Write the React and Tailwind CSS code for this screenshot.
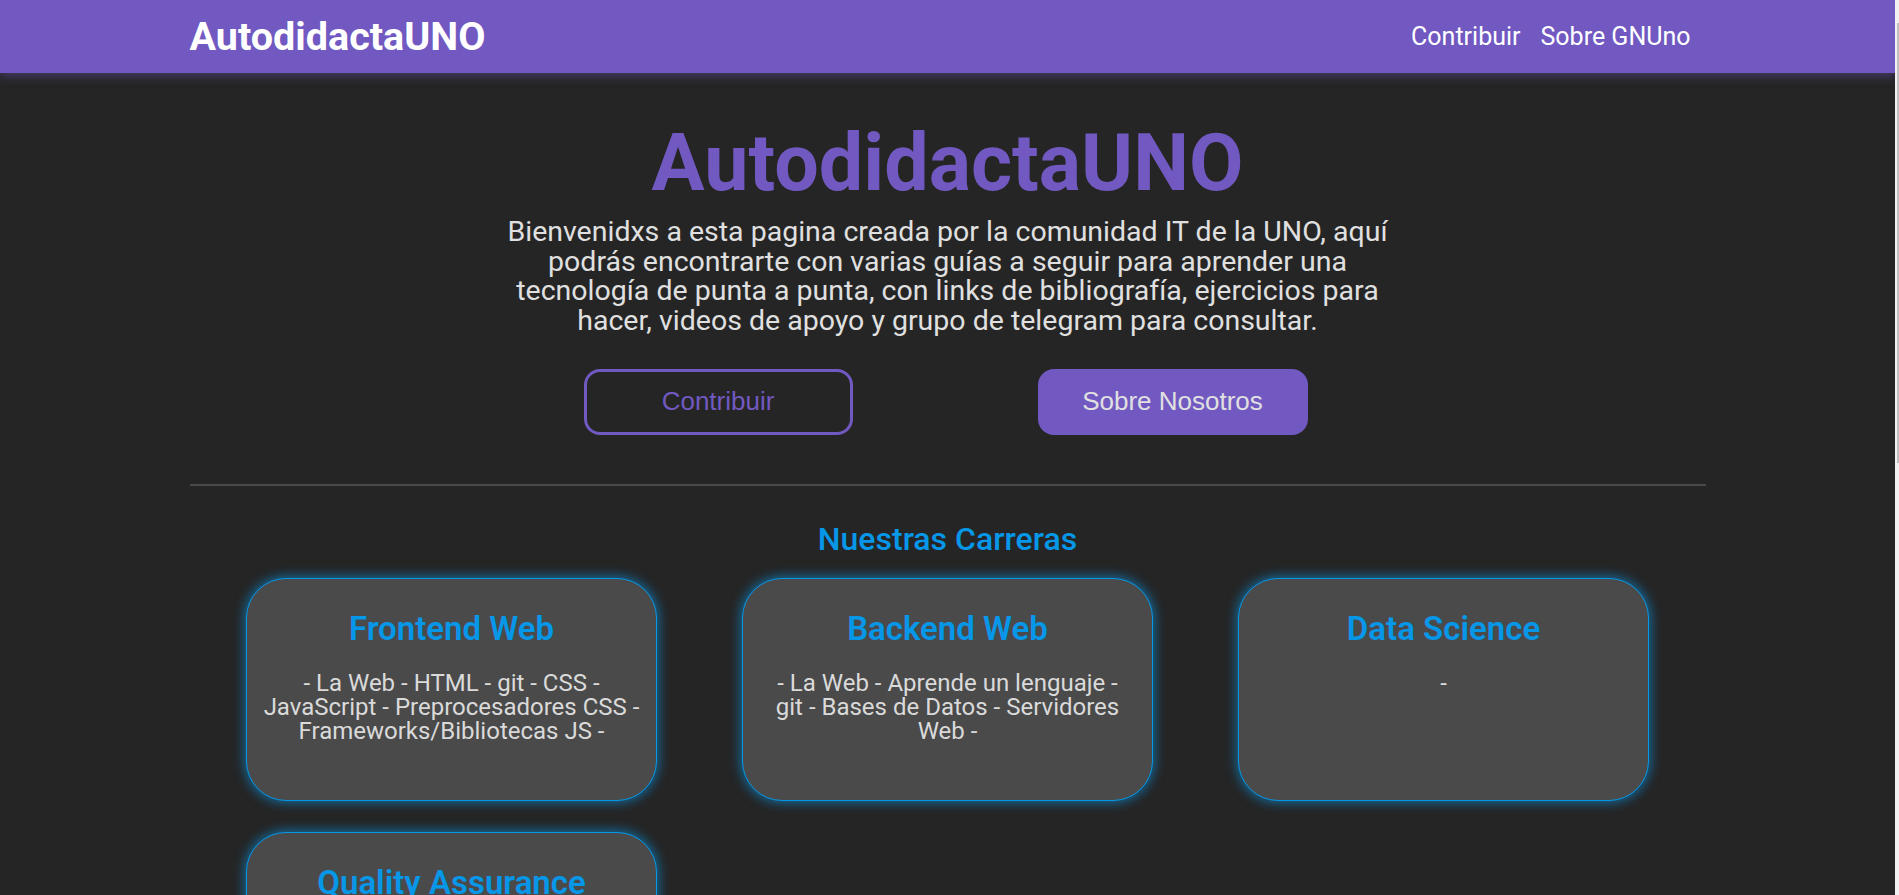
import React from 'react';

const careers = [
  {
    title: 'Frontend Web',
    lines: ['- La Web - HTML - git - CSS -', 'JavaScript - Preprocesadores CSS -', 'Frameworks/Bibliotecas JS -'],
  },
  {
    title: 'Backend Web',
    lines: ['- La Web - Aprende un lenguaje -', 'git - Bases de Datos - Servidores', 'Web -'],
  },
  { title: 'Data Science', lines: ['-'] },
  { title: 'Quality Assurance', lines: ['-'] },
];

const intro = [
  'Bienvenidxs a esta pagina creada por la comunidad IT de la UNO, aquí',
  'podrás encontrarte con varias guías a seguir para aprender una',
  'tecnología de punta a punta, con links de bibliografía, ejercicios para',
  'hacer, videos de apoyo y grupo de telegram para consultar.',
];

function CareerCard({ title, lines }) {
  return (
    <div className="h-[223px] rounded-[40px] border border-[#0797e8] bg-[#4a4a4a] px-3 pt-[31px] text-center shadow-[0_0_11px_2px_rgba(7,151,232,0.6)]">
      <h3 className="text-[33px] font-semibold leading-[38px] text-[#0797e8]">{title}</h3>
      <div className="mt-[23px] text-[24px] leading-[24px] text-[#dadada]">
        {lines.map((l, i) => (
          <p key={i} className="whitespace-nowrap">{l}</p>
        ))}
      </div>
    </div>
  );
}

export default function App() {
  return (
    <div className="flex h-screen overflow-hidden bg-[#252525]" style={{ fontFamily: 'Roboto, "Noto Sans", sans-serif' }}>
      <div className="min-w-0 flex-1 overflow-hidden">
        {/* Navbar */}
        <header className="relative z-10 h-[73px] bg-[#7159c1] shadow-[0_3px_10px_rgba(113,89,193,0.45)]">
          <nav className="mx-auto flex h-full w-[80%] items-center justify-between pr-[15px]">
            <a className="text-[39.5px] font-bold text-white">AutodidactaUNO</a>
            <div className="flex items-center gap-[20px] text-[25px] text-white">
              <a>Contribuir</a>
              <a>Sobre GNUno</a>
            </div>
          </nav>
        </header>

        {/* Hero */}
        <section className="flex flex-col items-center">
          <h1 className="mt-[51px] text-[79px] font-bold leading-none text-[#7159c1]">AutodidactaUNO</h1>
          <p className="mt-[14px] text-center text-[28.5px] leading-[29.7px] text-[#e0e0e0]">
            {intro.map((l, i) => (
              <React.Fragment key={i}>
                {l}
                {i < intro.length - 1 && <br />}
              </React.Fragment>
            ))}
          </p>
          <div className="-ml-[4px] mt-[33px] flex gap-[185px]" style={{ fontFamily: '"Liberation Sans", Arial, sans-serif' }}>
            <button className="h-[66px] w-[269px] rounded-[16px] border-[3px] border-[#7159c1] text-[26px] text-[#7159c1]">
              Contribuir
            </button>
            <button className="h-[66px] w-[270px] rounded-[16px] bg-[#7159c1] text-[26px] text-[#e0e0e0]">
              Sobre Nosotros
            </button>
          </div>
        </section>

        <hr className="mx-auto mt-[49px] h-[2px] w-[80%] border-0 bg-[#4a4a4a]" />

        {/* Careers */}
        <section>
          <h2 className="mt-[34px] text-center text-[32px] font-medium leading-[38px] text-[#0797e8]">Nuestras Carreras</h2>
          <div className="mt-[20px] grid grid-cols-[repeat(3,411px)] justify-center gap-x-[85px] gap-y-[31px] pb-10">
            {careers.map((c) => (
              <CareerCard key={c.title} {...c} />
            ))}
          </div>
        </section>
      </div>

      {/* Scrollbar */}
      <div className="w-[4px] bg-[#f1f1f1] pl-[2px] pt-[23px]">
        <div className="h-[440px] bg-[#c1c1c1]" />
      </div>
    </div>
  );
}
